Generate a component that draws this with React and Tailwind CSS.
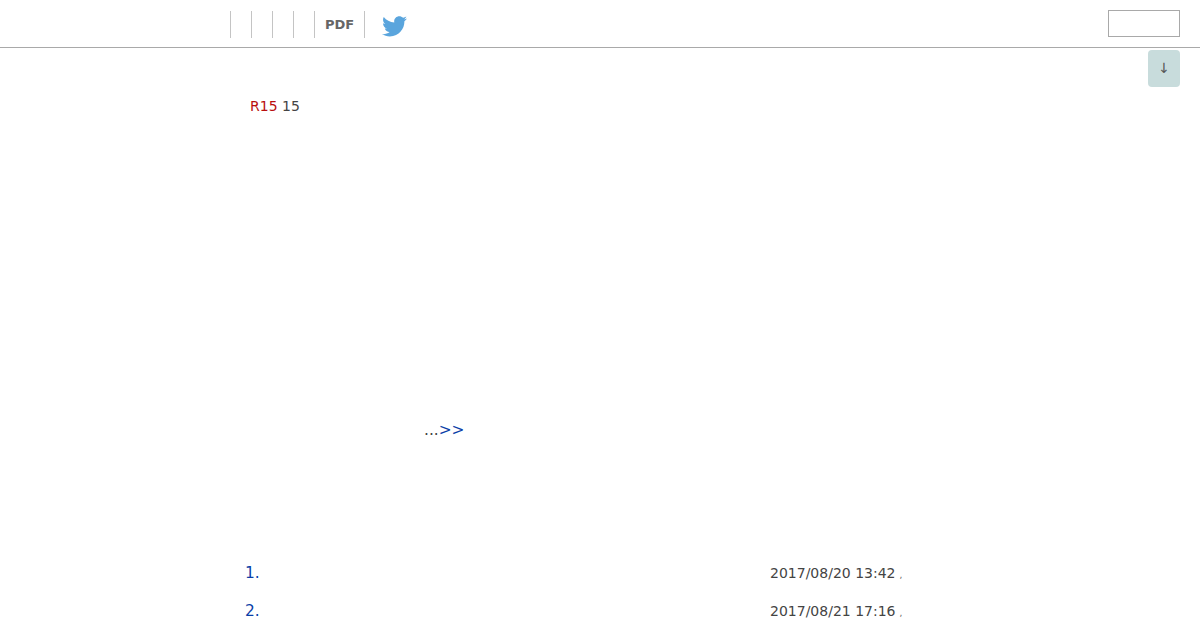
import React from "react";

const font = { fontFamily: '"DejaVu Sans", sans-serif' };

function Sep() {
  return <div className="w-[21px] h-[27px] border-l border-[#c4c4c4]" />;
}

function TwitterBird() {
  return (
    <svg width="25" height="21" viewBox="0 0 24 20" fill="#5aa5dd" className="mt-[3px]">
      <path d="M24 2.4c-.9.4-1.8.7-2.8.8 1-.6 1.8-1.6 2.2-2.7-1 .6-2 1-3.100 1.200C19.300.7 18 .1 16.600.1c-2.700 0-4.900 2.200-4.900 4.900 0 .4 0 .8.100 1.100C7.700 5.900 4.100 4 1.700.9c-.4.700-.7 1.600-.7 2.500 0 1.700.9 3.200 2.200 4.100-.8 0-1.600-.2-2.200-.6v.1c0 2.400 1.700 4.400 3.900 4.800-.4.100-.8.200-1.300.2-.3 0-.6 0-.9-.1.600 2 2.400 3.400 4.600 3.400-1.700 1.300-3.800 2.100-6.100 2.100-.4 0-.8 0-1.200-.1 2.200 1.400 4.800 2.200 7.500 2.200 9.100 0 14-7.500 14-14v-.6c1-.7 1.800-1.600 2.500-2.500z" />
    </svg>
  );
}

function ListRow({ num, date }) {
  return (
    <div className="flex items-center h-[38px]">
      <div className="w-[525px] pt-[2px] text-[15.4px] text-[#0b3fa8]">{num}</div>
      <div className="text-[14px] text-[#444444] whitespace-nowrap">{date}</div>
      <div className="ml-[4px] text-[9px] text-[#666666] leading-none pt-[4px]">,</div>
    </div>
  );
}

export default function App() {
  return (
    <div className="w-[1200px] h-[630px] overflow-hidden bg-white" style={font}>
      <div className="h-[48px] border-b border-[#a9a9a9] flex items-start justify-between pl-[230px] pr-[20px]">
        <div className="flex items-center mt-[11px]">
          <Sep />
          <Sep />
          <Sep />
          <Sep />
          <div className="h-[27px] w-[50px] border-l border-[#c4c4c4] flex items-center justify-center text-[13px] font-bold text-[#666666]">
            PDF
          </div>
          <div className="h-[27px] border-l border-[#c4c4c4] pl-[17px] flex items-center">
            <TwitterBird />
          </div>
        </div>
        <input className="mt-[10px] w-[72px] h-[27px] border border-[#a9a9a9] bg-white" />
      </div>

      <div className="flex justify-end pr-[20px] pt-[2px]">
        <button className="w-[32px] h-[37px] rounded-[4px] bg-[#c8dcdc] text-[#555555] text-[14px] flex items-center justify-center">
          ↓
        </button>
      </div>

      <div className="pl-[250px] pt-[10px] text-[14px] leading-[18px] text-[#444444]">
        <span className="text-[#b90f0f]">R15</span> 15
      </div>

      <div className="pl-[424px] pt-[305px] text-[15.4px] leading-[20px] text-[#0b3fa8]">
        <span className="text-[#444444]">...</span>
        <span>&gt;&gt;</span>
      </div>

      <div className="pl-[245px] pt-[114px]">
        <ListRow num="1." date="2017/08/20 13:42" />
        <ListRow num="2." date="2017/08/21 17:16" />
      </div>
    </div>
  );
}
